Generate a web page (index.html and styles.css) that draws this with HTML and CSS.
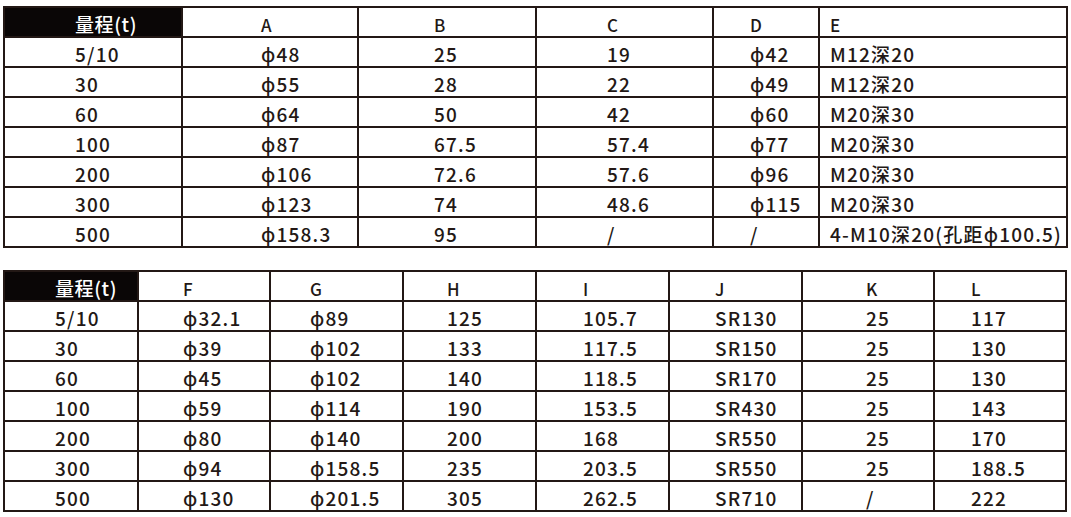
FILE: index.html
```html
<!DOCTYPE html>
<html lang="zh">
<head>
<meta charset="utf-8">
<title>规格表</title>
<link rel="stylesheet" href="styles.css">
</head>
<body>
<div class="page">
  <table class="spec spec-top">
    <colgroup>
      <col class="w-range1"><col class="w-a"><col class="w-b"><col class="w-c"><col class="w-d"><col class="w-e">
    </colgroup>
    <thead>
      <tr><th class="range">量程(t)</th><th>A</th><th>B</th><th>C</th><th>D</th><th>E</th></tr>
    </thead>
    <tbody>
      <tr><td>5/10</td><td>ϕ48</td><td>25</td><td>19</td><td>ϕ42</td><td>M12深20</td></tr>
      <tr><td>30</td><td>ϕ55</td><td>28</td><td>22</td><td>ϕ49</td><td>M12深20</td></tr>
      <tr><td>60</td><td>ϕ64</td><td>50</td><td>42</td><td>ϕ60</td><td>M20深30</td></tr>
      <tr><td>100</td><td>ϕ87</td><td>67.5</td><td>57.4</td><td>ϕ77</td><td>M20深30</td></tr>
      <tr><td>200</td><td>ϕ106</td><td>72.6</td><td>57.6</td><td>ϕ96</td><td>M20深30</td></tr>
      <tr><td>300</td><td>ϕ123</td><td>74</td><td>48.6</td><td>ϕ115</td><td>M20深30</td></tr>
      <tr><td>500</td><td>ϕ158.3</td><td>95</td><td>/</td><td>/</td><td>4-M10深20(孔距ϕ100.5)</td></tr>
    </tbody>
  </table>

  <table class="spec spec-bottom">
    <colgroup>
      <col class="w-range2"><col class="w-f"><col class="w-g"><col class="w-h"><col class="w-i"><col class="w-j"><col class="w-k"><col class="w-l">
    </colgroup>
    <thead>
      <tr><th class="range">量程(t)</th><th>F</th><th>G</th><th>H</th><th>I</th><th>J</th><th>K</th><th>L</th></tr>
    </thead>
    <tbody>
      <tr><td>5/10</td><td>ϕ32.1</td><td>ϕ89</td><td>125</td><td>105.7</td><td>SR130</td><td>25</td><td>117</td></tr>
      <tr><td>30</td><td>ϕ39</td><td>ϕ102</td><td>133</td><td>117.5</td><td>SR150</td><td>25</td><td>130</td></tr>
      <tr><td>60</td><td>ϕ45</td><td>ϕ102</td><td>140</td><td>118.5</td><td>SR170</td><td>25</td><td>130</td></tr>
      <tr><td>100</td><td>ϕ59</td><td>ϕ114</td><td>190</td><td>153.5</td><td>SR430</td><td>25</td><td>143</td></tr>
      <tr><td>200</td><td>ϕ80</td><td>ϕ140</td><td>200</td><td>168</td><td>SR550</td><td>25</td><td>170</td></tr>
      <tr><td>300</td><td>ϕ94</td><td>ϕ158.5</td><td>235</td><td>203.5</td><td>SR550</td><td>25</td><td>188.5</td></tr>
      <tr><td>500</td><td>ϕ130</td><td>ϕ201.5</td><td>305</td><td>262.5</td><td>SR710</td><td>/</td><td>222</td></tr>
    </tbody>
  </table>
</div>
</body>
</html>
```

FILE: styles.css
```css
html, body {
  margin: 0;
  background: #ffffff;
}

body {
  font-family: "Noto Sans CJK SC", "Noto Sans", sans-serif;
  color: #231815;
}

.page {
  display: flex;
  flex-direction: column;
  gap: 22px;
  padding: 6px 0 0 3px;
}

.spec {
  border-collapse: collapse;
  table-layout: fixed;
}

.spec-top { width: 1063px; }
.spec-bottom { width: 1062px; }

.spec th,
.spec td {
  border: 2px solid #231815;
  height: 30px;
  box-sizing: border-box;
  padding: 2px 0 0 0;
  text-align: left;
  vertical-align: middle;
  white-space: nowrap;
  line-height: 1;
  font-weight: 500;
  letter-spacing: 1.2px;
}

.spec td {
  font-size: 19px;
}

.spec th {
  font-size: 17px;
  padding-top: 5px;
}

.spec th.range {
  background: #0a0606;
  color: #ffffff;
  font-size: 19px;
  letter-spacing: 0.6px;
  padding-top: 2px;
}

/* column widths */
.w-range1 { width: 178px; }
.w-a { width: 176px; }
.w-b { width: 178px; }
.w-c { width: 177px; }
.w-d { width: 106px; }
.w-e { width: 248px; }

.w-range2 { width: 134px; }
.w-f { width: 132px; }
.w-g { width: 133px; }
.w-h { width: 133px; }
.w-i { width: 133px; }
.w-j { width: 133px; }
.w-k { width: 132px; }
.w-l { width: 132px; }

/* text indents, top table */
.spec-top th:nth-child(1), .spec-top td:nth-child(1) { padding-left: 70px; }
.spec-top th:nth-child(2), .spec-top td:nth-child(2) { padding-left: 78px; }
.spec-top th:nth-child(3), .spec-top td:nth-child(3) { padding-left: 75px; }
.spec-top th:nth-child(4), .spec-top td:nth-child(4) { padding-left: 70px; }
.spec-top th:nth-child(5), .spec-top td:nth-child(5) { padding-left: 36px; }
.spec-top th:nth-child(6), .spec-top td:nth-child(6) { padding-left: 10px; }

/* text indents, bottom table */
.spec-bottom th:nth-child(1), .spec-bottom td:nth-child(1) { padding-left: 50px; }
.spec-bottom th:nth-child(2), .spec-bottom td:nth-child(2) { padding-left: 44px; }
.spec-bottom th:nth-child(3), .spec-bottom td:nth-child(3) { padding-left: 39px; }
.spec-bottom th:nth-child(4), .spec-bottom td:nth-child(4) { padding-left: 43px; }
.spec-bottom th:nth-child(5), .spec-bottom td:nth-child(5) { padding-left: 46px; }
.spec-bottom th:nth-child(6), .spec-bottom td:nth-child(6) { padding-left: 45px; }
.spec-bottom th:nth-child(7), .spec-bottom td:nth-child(7) { padding-left: 63px; }
.spec-bottom th:nth-child(8), .spec-bottom td:nth-child(8) { padding-left: 36px; }
```
